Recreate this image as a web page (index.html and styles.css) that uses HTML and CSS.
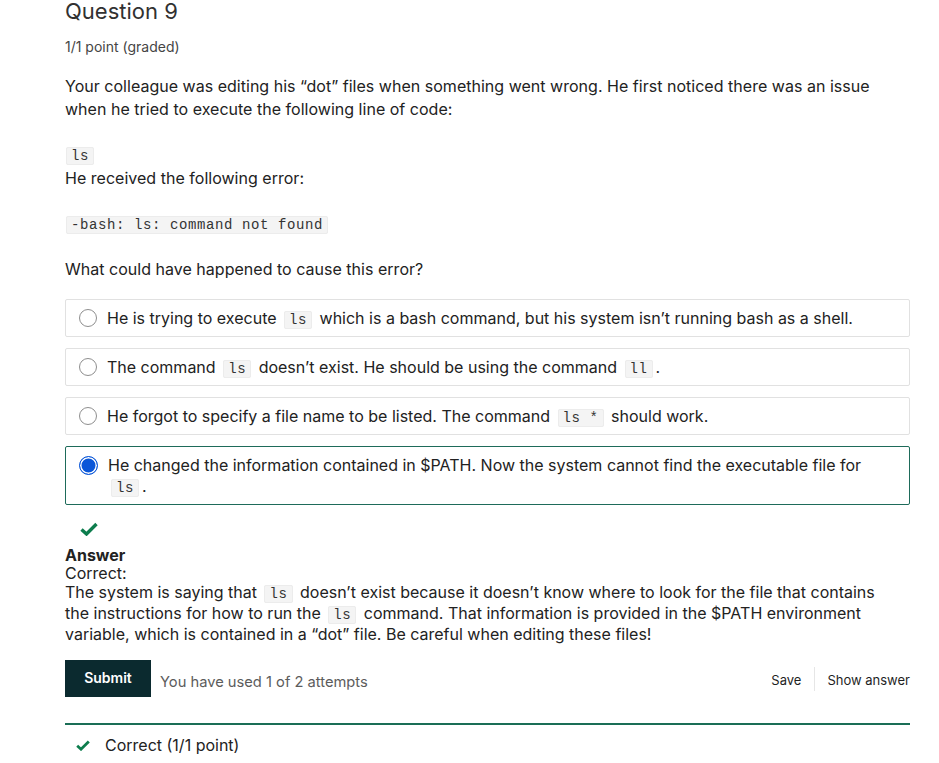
FILE: index.html
```html
<!DOCTYPE html>
<html lang="en">
<head>
<meta charset="utf-8">
<title>Question 9</title>
<link rel="stylesheet" href="styles.css">
</head>
<body>
<div class="problem">
  <h3 class="title">Question 9</h3>
  <div class="points">1/1 point (graded)</div>
  <p class="para">Your colleague was editing his “dot” files when something went wrong. He first noticed there was an issue when he tried to execute the following line of code:</p>
  <div class="codeline"><code>ls</code></div>
  <p class="para tight">He received the following error:</p>
  <div class="codeline err"><code>-bash: ls: command not found</code></div>
  <p class="para q">What could have happened to cause this error?</p>
  <div class="options">
    <label class="opt"><span class="radio"></span><span class="otext">He is trying to execute <code>ls</code> which is a bash command, but his system isn’t running bash as a shell.</span></label>
    <label class="opt"><span class="radio"></span><span class="otext">The command <code>ls</code> doesn’t exist. He should be using the command <code>ll</code>.</span></label>
    <label class="opt"><span class="radio"></span><span class="otext">He forgot to specify a file name to be listed. The command <code>ls *</code> should work.</span></label>
    <label class="opt selected"><span class="radio on"></span><span class="otext">He changed the information contained in $PATH. Now the system cannot find the executable file for <code>ls</code>.</span></label>
  </div>
  <div class="mark">
    <svg width="18" height="14" viewBox="0 0 18 14"><path d="M1.5 7.5 L6.5 12 L16.5 2" fill="none" stroke="#0d7d4d" stroke-width="3.4"/></svg>
  </div>
  <div class="answer">
    <div class="ans-head">Answer</div>
    <div class="ans-label">Correct:</div>
    <div class="ans-text">The system is saying that <code>ls</code> doesn’t exist because it doesn’t know where to look for the file that contains the instructions for how to run the <code>ls</code> command. That information is provided in the $PATH environment variable, which is contained in a “dot” file. Be careful when editing these files!</div>
  </div>
  <div class="actions">
    <button class="submit">Submit</button>
    <span class="attempts">You have used 1 of 2 attempts</span>
    <span class="spacer"></span>
    <span class="link">Save</span>
    <span class="sep"></span>
    <span class="link">Show answer</span>
  </div>
  <div class="status">
    <svg width="14" height="11" viewBox="0 0 14 11"><path d="M1.2 5.8 L5 9.2 L12.8 1.5" fill="none" stroke="#0d7d4d" stroke-width="2.8"/></svg>
    <span>Correct (1/1 point)</span>
  </div>
</div>
</body>
</html>
```

FILE: styles.css
```css
html, body {
  margin: 0;
  padding: 0;
  background: #fff;
}
body {
  font-family: Inter, "Noto Sans", sans-serif;
  color: #222;
}
.problem {
  width: 845px;
  margin-left: 65px;
}
.title {
  margin: 0;
  margin-top: -4px;
  font-size: 22px;
  font-weight: 400;
  line-height: 30px;
  color: #313131;
}
.points {
  margin-top: 12px;
  font-size: 14px;
  line-height: 18px;
  color: #454545;
}
.para {
  margin: 0;
  font-size: 16px;
  letter-spacing: 0.02px;
  line-height: 23px;
}
.points + .para {
  margin-top: 19px;
}
code {
  font-family: "Liberation Mono", "Courier New", monospace;
  font-size: 14px;
  letter-spacing: 0.6px;
  line-height: 1;
  color: #333;
  background: #f4f4f4;
  border: 1px solid #ececec;
  border-radius: 2px;
  padding: 0 4px;
  margin: 0 3px;
}
.codeline {
  margin-top: 24px;
  line-height: 18px;
  height: 18px;
}
.codeline code {
  margin: 0 0 0 1px;
}
.tight {
  margin-top: 4px;
}
.codeline.err {
  margin-top: 24px;
}
.q {
  margin-top: 26px;
}
.options {
  margin-top: 18px;
  display: flex;
  flex-direction: column;
  gap: 11px;
}
.opt {
  display: flex;
  align-items: flex-start;
  gap: 10px;
  border: 1px solid #e1e1e1;
  border-radius: 2px;
  padding: 8px 30px 7px 13px;
  font-size: 16px;
  line-height: 21px;
}
.opt.selected {
  border-color: #1e6b5a;
}
.radio {
  flex: none;
  width: 16px;
  height: 16px;
  border: 1.5px solid #8e8e8e;
  border-radius: 50%;
  margin-top: 1px;
  background: #fff;
  box-sizing: content-box;
}
.radio.on {
  border: 1px solid #0a56d8;
  background: #0a56d8;
  box-shadow: inset 0 0 0 1.5px #fff;
  width: 17px;
  height: 17px;
}
.otext {
  flex: 1;
}
.mark {
  margin-top: 15px;
  margin-left: 15px;
  height: 14px;
}
.answer {
  margin-top: 12px;
  font-size: 16px;
  line-height: 21px;
}
.ans-head {
  font-weight: 700;
  line-height: 18px;
}
.ans-label {
  line-height: 18px;
}
.ans-text {
  padding-right: 10px;
}
.actions {
  margin-top: 15px;
  display: flex;
  align-items: center;
}
.submit {
  background: #0b2a2f;
  color: #fff;
  border: none;
  border-radius: 0;
  width: 86px;
  height: 37px;
  font-family: Inter, sans-serif;
  font-weight: 600;
  font-size: 14px;
  padding: 0 0 2px 0;
}
.attempts {
  margin-left: 9px;
  margin-top: 7px;
  font-size: 14.7px;
  color: #5c5c5c;
}
.spacer {
  flex: 1;
}
.link {
  font-size: 13px;
  color: #1f1f1f;
  margin-top: 3px;
}
.sep {
  width: 1px;
  height: 24px;
  background: #e6e6e6;
  margin: 0 12px 0 13px;
}
.status {
  margin-top: 26px;
  border-top: 2px solid #1a6e56;
  padding-top: 10px;
  display: flex;
  align-items: center;
  gap: 15px;
  padding-left: 11px;
  font-size: 16px;
}
```
